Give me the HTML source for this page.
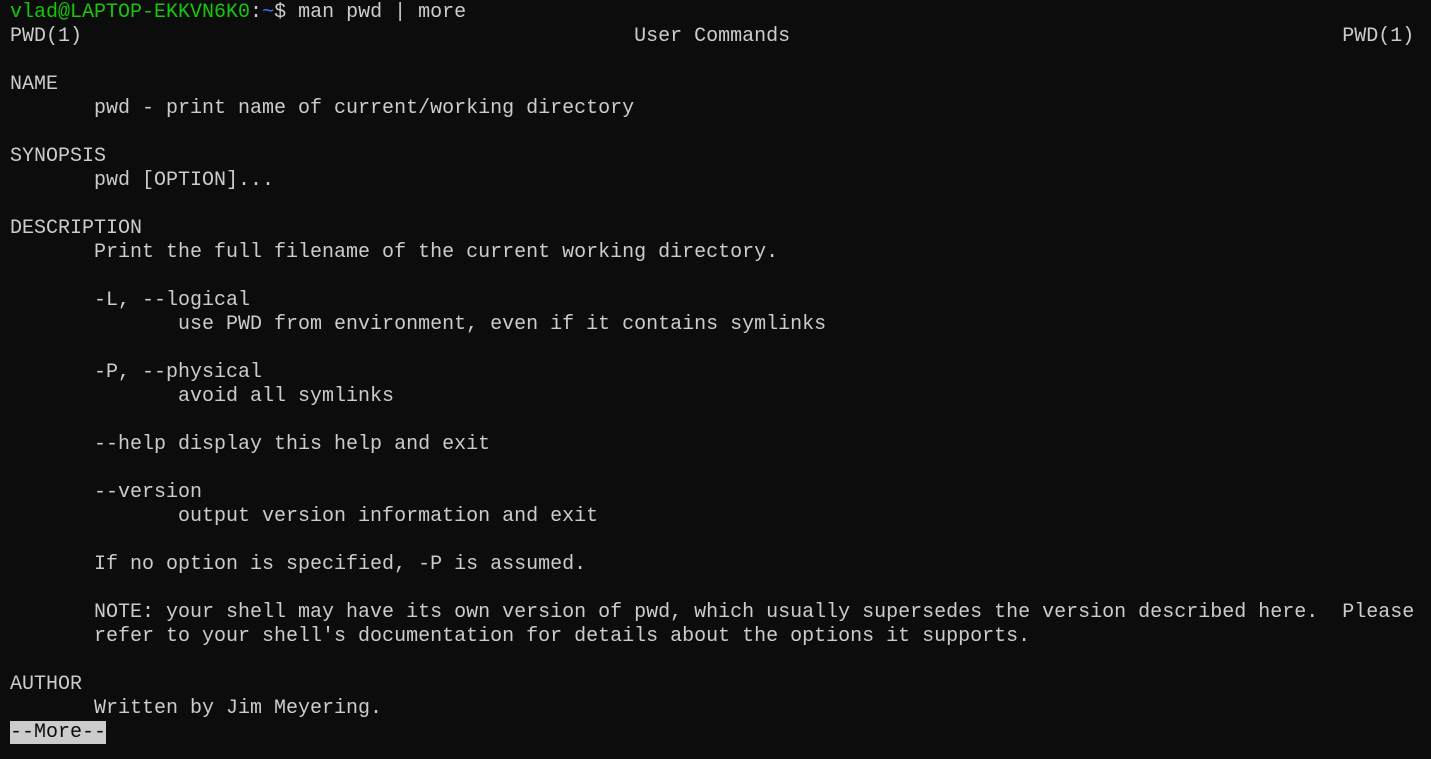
<!DOCTYPE html>
<html><head><meta charset="utf-8"><style>
html,body{margin:0;padding:0;background:#0c0c0c;width:1431px;height:759px;overflow:hidden}
pre{margin:0;position:absolute;left:10px;top:1px;font-family:"Liberation Mono",monospace;font-size:20px;line-height:24px;color:#cccccc}
.g{color:#16c60c}.b{color:#3b78ff}.m{background:#cccccc;color:#0c0c0c}
</style></head><body><pre><span class="g">vlad@LAPTOP-EKKVN6K0</span>:<span class="b">~</span>$ man pwd | more
PWD(1)                                              User Commands                                              PWD(1)

NAME
       pwd - print name of current/working directory

SYNOPSIS
       pwd [OPTION]...

DESCRIPTION
       Print the full filename of the current working directory.

       -L, --logical
              use PWD from environment, even if it contains symlinks

       -P, --physical
              avoid all symlinks

       --help display this help and exit

       --version
              output version information and exit

       If no option is specified, -P is assumed.

       NOTE: your shell may have its own version of pwd, which usually supersedes the version described here.  Please
       refer to your shell's documentation for details about the options it supports.

AUTHOR
       Written by Jim Meyering.
<span class="m">--More--</span></pre></body></html>
